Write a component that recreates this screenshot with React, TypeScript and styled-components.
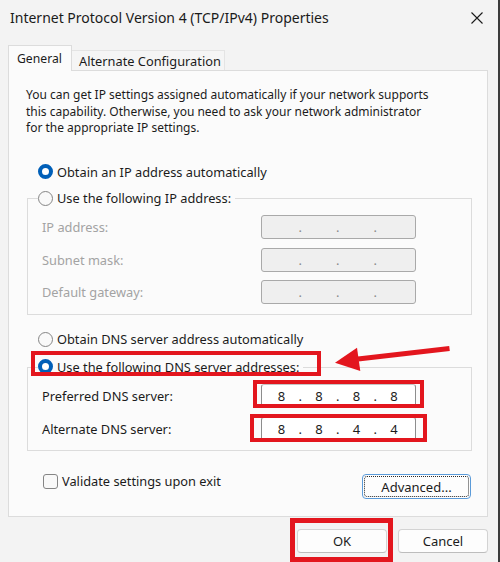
import React from 'react';
import styled, { createGlobalStyle, css } from 'styled-components';

const GlobalStyle = createGlobalStyle`
  html, body {
    margin: 0;
    padding: 0;
    background: #f3f3f3;
  }
  body {
    font-family: "Noto Sans", "Open Sans", sans-serif;
    -webkit-font-smoothing: antialiased;
  }
`;

const RED = '#e3161e';
const PANEL_BG = '#fbfbfb';

const Window = styled.div`
  position: relative;
  box-sizing: border-box;
  width: 500px;
  height: 562px;
  background: #f3f3f3;
  border-right: 2px solid #3b3b3b;
  display: flex;
  flex-direction: column;
  color: #1b1b1b;
  font-size: 12.8px;
  overflow: hidden;
`;

const TitleBar = styled.div`
  height: 35px;
  flex: none;
  display: flex;
  align-items: center;
  justify-content: space-between;
  padding: 0 15px 0 10px;
`;

const Title = styled.span`
  font-size: 14px;
  color: #1a1a1a;
`;

const CloseGlyph = styled.svg`
  width: 12px;
  height: 12px;
  display: block;
`;

const Body = styled.div`
  padding: 10px 0 0 8px;
  display: flex;
  flex-direction: column;
`;

const TabStrip = styled.div`
  display: flex;
  align-items: flex-end;
  height: 25px;
  position: relative;
  z-index: 1;
`;

const Tab = styled.div<{ $active?: boolean }>`
  box-sizing: border-box;
  display: flex;
  align-items: center;
  white-space: nowrap;
  ${(p) =>
    p.$active
      ? css`
          height: 26px;
          margin-bottom: -1px;
          width: 64px;
          padding-left: 8px;
          font-size: 12.2px;
          background: ${PANEL_BG};
          border: 1px solid #dcdcdc;
          border-bottom: none;
          color: #1b1b1b;
        `
      : css`
          height: 20px;
          width: 153px;
          padding-left: 7px;
          font-size: 12.8px;
          background: #f5f5f5;
          border-top: 1px solid #e4e4e4;
          border-right: 1px solid #e4e4e4;
          color: #1b1b1b;
        `}
`;

const Panel = styled.div`
  position: relative;
  box-sizing: border-box;
  width: 480px;
  height: 447px;
  background: ${PANEL_BG};
  border: 1px solid #dcdcdc;
  display: flex;
  flex-direction: column;
  padding: 16px 15px 0 18px;
`;

const Intro = styled.p`
  margin: 0 0 0 -1px;
  font-size: 12px;
  line-height: 16.5px;
  white-space: nowrap;
`;

const RadioRow = styled.label<{ $legend?: boolean; $top?: number }>`
  position: relative;
  display: inline-flex;
  align-items: center;
  gap: 4px;
  height: 20px;
  align-self: flex-start;
  white-space: nowrap;
  margin-top: ${(p) => p.$top ?? 0}px;
  ${(p) =>
    p.$legend
      ? css`
          margin-top: -11px;
          margin-left: -4px;
          padding-right: 4px;
          background: ${PANEL_BG};
        `
      : css`
          margin-left: 11px;
        `}
`;

const RadioMark = styled.span<{ $checked?: boolean }>`
  box-sizing: border-box;
  flex: none;
  width: 15px;
  height: 15px;
  border-radius: 50%;
  ${(p) =>
    p.$checked
      ? css`
          background: #ffffff;
          border: 4.5px solid #005fb8;
        `
      : css`
          background: #f9f9f9;
          border: 1px solid #858585;
        `}
`;

const GroupBox = styled.div<{ $top: number; $bottom: number }>`
  display: flex;
  flex-direction: column;
  border: 1px solid #dcdcdc;
  margin-top: ${(p) => p.$top}px;
  padding: 0 0 ${(p) => p.$bottom}px 14px;
`;

const FieldGrid = styled.div<{ $gap: number }>`
  display: grid;
  grid-template-columns: 219px 155px;
  grid-auto-rows: 24px;
  row-gap: ${(p) => p.$gap}px;
  align-items: center;
  margin-top: 7px;
`;

const FieldLabel = styled.span<{ $disabled?: boolean }>`
  color: ${(p) => (p.$disabled ? '#a3a3a3' : '#1b1b1b')};
  white-space: nowrap;
`;

const IpBox = styled.div<{ $disabled?: boolean }>`
  position: relative;
  box-sizing: border-box;
  height: 24px;
  display: flex;
  align-items: center;
  padding-left: 4.5px;
  border-radius: 3px;
  ${(p) =>
    p.$disabled
      ? css`
          background: #efefef;
          border: 1px solid #a9a9a9;
          color: #8a8a8a;
        `
      : css`
          background: #ffffff;
          border: 1px solid #c4c4c4;
          border-left-color: #8d8d8d;
          border-right-color: #8d8d8d;
          color: #1b1b1b;
        `}
`;

const Octet = styled.span`
  width: 30px;
  text-align: center;
  font-size: 13px;
`;

const OctetDot = styled.span`
  width: 7.5px;
  text-align: center;
  font-size: 13px;
`;

const Highlight = styled.span<{ $t: number; $r: number; $b: number; $l: number; $w: number }>`
  position: absolute;
  box-sizing: border-box;
  top: ${(p) => p.$t}px;
  right: ${(p) => p.$r}px;
  bottom: ${(p) => p.$b}px;
  left: ${(p) => p.$l}px;
  border: ${(p) => p.$w}px solid ${RED};
  pointer-events: none;
  z-index: 2;
`;

const LegendHighlight = styled.span`
  position: absolute;
  box-sizing: border-box;
  top: -6px;
  left: -7px;
  width: 290px;
  height: 25px;
  border: 4px solid ${RED};
  pointer-events: none;
  z-index: 2;
`;

const ArrowMark = styled.svg`
  position: absolute;
  left: 322px;
  top: 270px;
  width: 125px;
  height: 35px;
  pointer-events: none;
  z-index: 2;
`;

const CheckRow = styled.div`
  display: flex;
  justify-content: space-between;
  align-items: flex-start;
  margin-top: 20.5px;
`;

const CheckLabel = styled.label`
  display: inline-flex;
  align-items: center;
  gap: 4px;
  height: 20px;
  margin-left: 16px;
  white-space: nowrap;
`;

const CheckBox = styled.span`
  box-sizing: border-box;
  width: 15px;
  height: 15px;
  border: 1px solid #858585;
  border-radius: 3px;
  background: #f9f9f9;
`;

const DialogButton = styled.button<{ $focused?: boolean; $w?: number; $h?: number }>`
  position: relative;
  box-sizing: border-box;
  width: ${(p) => p.$w ?? 90}px;
  height: ${(p) => p.$h ?? 24}px;
  padding: 0;
  font-family: inherit;
  font-size: 13px;
  color: #1b1b1b;
  background: #fdfdfd;
  border: 1px solid #d3d3d3;
  border-bottom-color: #bdbdbd;
  border-radius: 4px;
  ${(p) =>
    p.$focused &&
    css`
      border-color: #5b9bd9;
      &::after {
        content: '';
        position: absolute;
        inset: 1px;
        border: 1px dotted #2a2a2a;
        border-radius: 3px;
      }
    `}
`;

const AdvancedButton = styled(DialogButton)`
  margin-top: 3px;
  margin-right: 1px;
`;

const ButtonRow = styled.div`
  display: flex;
  justify-content: flex-end;
  gap: 11px;
  padding: 12px 10px 0 0;
`;

const OkWrap = styled.div`
  position: relative;
  display: flex;
`;

type Ip = { label: string; octets?: string[]; mark?: { t: number; r: number; b: number; l: number } };

const IpField = ({ label, octets, disabled, mark }: Ip & { disabled?: boolean }) => (
  <>
    <FieldLabel $disabled={disabled}>{label}</FieldLabel>
    <IpBox $disabled={disabled}>
      {[0, 1, 2, 3].map((i) => (
        <React.Fragment key={i}>
          <Octet>{octets ? octets[i] : ''}</Octet>
          {i < 3 && <OctetDot>.</OctetDot>}
        </React.Fragment>
      ))}
      {mark && <Highlight $t={mark.t} $r={mark.r} $b={mark.b} $l={mark.l} $w={4.5} />}
    </IpBox>
  </>
);

const staticFields: Ip[] = [
  { label: 'IP address:' },
  { label: 'Subnet mask:' },
  { label: 'Default gateway:' },
];

const dnsFields: Ip[] = [
  { label: 'Preferred DNS server:', octets: ['8', '8', '8', '8'], mark: { t: -4.5, r: -9, b: -1.5, l: -9.5 } },
  { label: 'Alternate DNS server:', octets: ['8', '8', '4', '4'], mark: { t: -3.5, r: -12, b: -2.5, l: -12 } },
];

export default function App() {
  return (
    <>
      <GlobalStyle />
      <Window>
        <TitleBar>
          <Title>Internet Protocol Version 4 (TCP/IPv4) Properties</Title>
          <CloseGlyph viewBox="0 0 12 12">
            <path d="M0.5 0.5 L11.5 11.5 M11.5 0.5 L0.5 11.5" stroke="#1a1a1a" strokeWidth="1.1" fill="none" />
          </CloseGlyph>
        </TitleBar>
        <Body>
          <TabStrip>
            <Tab $active>General</Tab>
            <Tab>Alternate Configuration</Tab>
          </TabStrip>
          <Panel>
            <Intro>
              You can get IP settings assigned automatically if your network supports
              <br />
              this capability. Otherwise, you need to ask your network administrator
              <br />
              for the appropriate IP settings.
            </Intro>

            <RadioRow $top={25}>
              <RadioMark $checked />
              Obtain an IP address automatically
            </RadioRow>

            <GroupBox $top={16.5} $bottom={10}>
              <RadioRow $legend>
                <RadioMark />
                Use the following IP address:
              </RadioRow>
              <FieldGrid $gap={8.5}>
                {staticFields.map((f) => (
                  <IpField key={f.label} {...f} disabled />
                ))}
              </FieldGrid>
            </GroupBox>

            <RadioRow $top={14}>
              <RadioMark />
              Obtain DNS server address automatically
            </RadioRow>

            <GroupBox $top={17.5} $bottom={9}>
              <RadioRow $legend>
                <RadioMark $checked />
                Use the following DNS server addresses:
                <LegendHighlight />
              </RadioRow>
              <FieldGrid $gap={9}>
                {dnsFields.map((f) => (
                  <IpField key={f.label} {...f} />
                ))}
              </FieldGrid>
            </GroupBox>

            <CheckRow>
              <CheckLabel>
                <CheckBox />
                Validate settings upon exit
              </CheckLabel>
              <AdvancedButton $focused $w={109} $h={25}>
                Advanced...
              </AdvancedButton>
            </CheckRow>

            <ArrowMark viewBox="0 0 125 35">
              <line x1="27" y1="18" x2="118.5" y2="7.5" stroke={RED} strokeWidth="5" />
              <polygon points="4,21.7 26,6.7 29.3,30" fill={RED} />
            </ArrowMark>
          </Panel>
          <ButtonRow>
            <OkWrap>
              <DialogButton>OK</DialogButton>
              <Highlight $t={-11} $r={-6} $b={-9} $l={-7} $w={5.5} />
            </OkWrap>
            <DialogButton>Cancel</DialogButton>
          </ButtonRow>
        </Body>
      </Window>
    </>
  );
}
